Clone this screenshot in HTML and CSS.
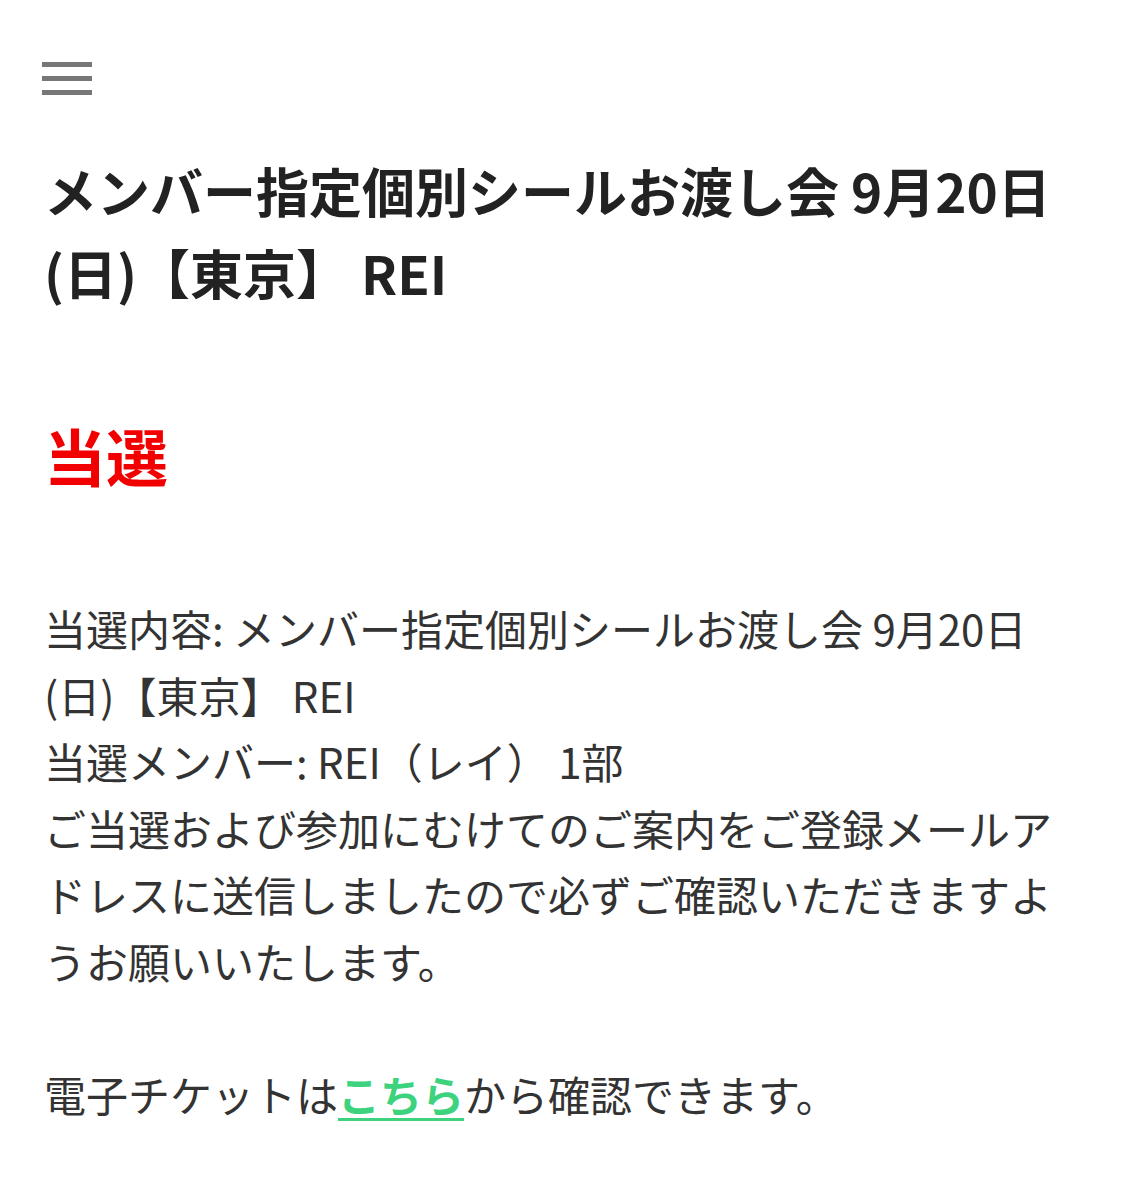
FILE: index.html
```html
<!DOCTYPE html>
<html lang="ja">
<head>
<meta charset="utf-8">
<title>当選</title>
<link rel="stylesheet" href="styles.css">
</head>
<body>
<div class="page">
  <header class="topbar">
    <button class="menu" aria-label="メニュー">
      <span></span><span></span><span></span>
    </button>
  </header>
  <h1 class="title">メンバー指定個別シールお渡し会 9月20日(日)【東京】 REI</h1>
  <p class="result">当選</p>
  <div class="details">
    <p>当選内容: メンバー指定個別シールお渡し会 9月20日(日)【東京】 REI<br>当選メンバー: REI（レイ） 1部<br>ご当選および参加にむけてのご案内をご登録メールアドレスに送信しましたので必ずご確認いただきますようお願いいたします。</p>
    <p class="ticket">電子チケットは<a href="#" class="link">こちら</a>から確認できます。</p>
  </div>
</div>
</body>
</html>
```
FILE: styles.css
```css
html, body {
  margin: 0;
  padding: 0;
  background: #ffffff;
}
body {
  font-family: "Noto Sans CJK JP", "Noto Sans", sans-serif;
  color: #333333;
}
.page {
  padding: 0 52px 0 44px;
}
.topbar {
  padding-top: 62px;
  height: 33px;
}
.menu {
  display: flex;
  flex-direction: column;
  gap: 9px;
  margin: 0 0 0 -2px;
  padding: 0;
  border: 0;
  background: none;
  width: 50px;
}
.menu span {
  display: block;
  width: 50px;
  height: 5px;
  background: #777777;
}
.title {
  margin: 54px 0 0;
  font-size: 53px;
  line-height: 82px;
  font-weight: 700;
  color: #222222;
}
.result {
  margin: 97px 0 0;
  font-size: 62px;
  line-height: 90px;
  font-weight: 700;
  color: #f20000;
}
.details {
  margin-top: 95px;
  font-size: 42px;
  line-height: 66.6px;
}
.details p {
  margin: 0;
}
.details .ticket {
  margin-top: 66.6px;
}
.link {
  color: #3dd27e;
  font-weight: 700;
  text-decoration: underline;
  text-decoration-thickness: 3px;
  text-underline-offset: 6px;
}
```
